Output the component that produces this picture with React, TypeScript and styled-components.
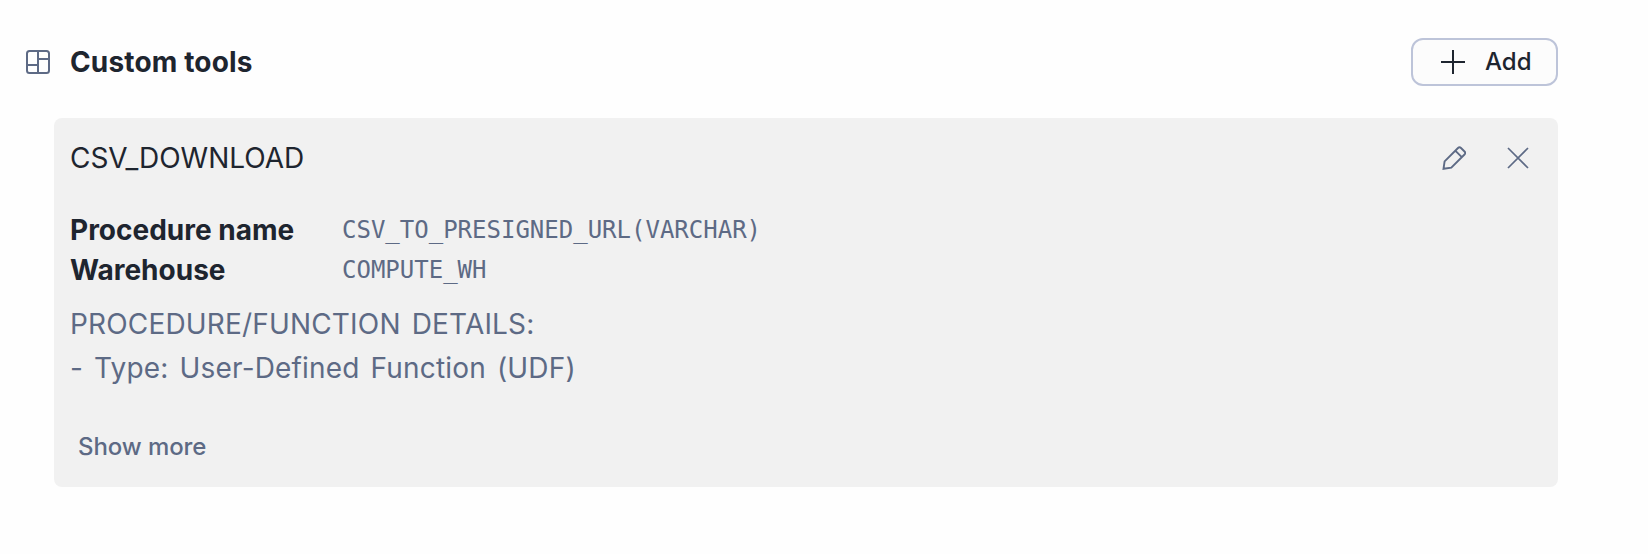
import React from "react";
import styled, { createGlobalStyle } from "styled-components";

const GlobalStyle = createGlobalStyle`
  *, *::before, *::after { box-sizing: border-box; }
  body {
    margin: 0;
    background: #fefefe;
    color: #1e252f;
    font-family: Inter, "Liberation Sans", sans-serif;
  }
`;

const Section = styled.section`
  width: 1558px;
  padding: 38px 0 0 26px;
`;

const Header = styled.header`
  display: flex;
  align-items: center;
  height: 48px;
`;

const Title = styled.h2`
  flex: 1;
  margin: 0 0 0 20px;
  font-size: 28px;
  line-height: 40px;
  font-weight: 700;
  letter-spacing: 0.15px;
`;

const AddButton = styled.button`
  display: flex;
  align-items: center;
  gap: 20px;
  width: 147px;
  height: 48px;
  padding: 0 0 0 28px;
  border: 2px solid #bdc4d9;
  border-radius: 12px;
  background: #fcfcfc;
  color: #1e252f;
  font: 500 24px/32px Inter, "Liberation Sans", sans-serif;
`;

const Card = styled.article`
  height: 369px;
  margin: 32px 0 0 28px;
  padding: 20px 16px 0;
  border-radius: 8px;
  background: #f1f1f1;
`;

const CardHeader = styled.div`
  display: flex;
  align-items: center;
  height: 40px;
  padding-right: 12px;
`;

const ToolName = styled.h3`
  flex: 1;
  margin: 0;
  font-size: 28px;
  line-height: 40px;
  font-weight: 400;
  letter-spacing: -0.04px;
`;

const Actions = styled.div`
  display: flex;
  gap: 40px;
`;

const IconButton = styled.button`
  display: flex;
  padding: 0;
  border: 0;
  background: none;
  color: #5d6a85;
`;

const Properties = styled.dl`
  display: grid;
  grid-template-columns: 272px 1fr;
  grid-auto-rows: 40px;
  margin: 32px 0 0;
`;

const Label = styled.dt`
  font-size: 28px;
  line-height: 40px;
  font-weight: 700;
`;

const Value = styled.dd`
  margin: 0;
  color: #5d6a85;
  font-family: "DejaVu Sans Mono", monospace;
  font-size: 24px;
  line-height: 40px;
`;

const Details = styled.p`
  margin: 12px 0 0;
  color: #5d6a85;
  font-size: 28px;
  line-height: 44px;
  white-space: pre-line;
  letter-spacing: 0.17px;
  word-spacing: 3px;
`;

const ShowMore = styled.button`
  display: block;
  margin: 41px 0 0;
  padding: 0 8px;
  border: 0;
  background: none;
  color: #5d6a85;
  font: 500 24px/32px Inter, "Liberation Sans", sans-serif;
  letter-spacing: -0.08px;
`;

const LayoutIcon = () => (
  <svg width="24" height="24" viewBox="0 0 24 24" fill="none" stroke="#5d6a85" strokeWidth="2">
    <rect x="1" y="1" width="22" height="22" rx="2.5" />
    <path d="M12 1V23M12 9H23M1 15H12" />
  </svg>
);

const PlusIcon = () => (
  <svg width="24" height="24" viewBox="0 0 24 24" fill="none" stroke="currentColor" strokeWidth="2">
    <path d="M12 0V24M0 12H24" />
  </svg>
);

const PencilIcon = () => (
  <svg width="24" height="24" viewBox="0 0 24 24" fill="none" stroke="currentColor" strokeWidth="1.9">
    <path d="M1.5 22.8L2.6 15.4L16 2Q17.5 0.5 19 2L22.5 5.5Q24 7 22.5 8.5L9.3 21.7L1.5 22.8ZM13.3 4.7L19.8 11.2" />
  </svg>
);

const CloseIcon = () => (
  <svg width="24" height="24" viewBox="0 0 24 24" fill="none" stroke="currentColor" strokeWidth="1.7">
    <path d="M2 2L22 22M22 2L2 22" />
  </svg>
);

const properties = [
  { label: "Procedure name", value: "CSV_TO_PRESIGNED_URL(VARCHAR)" },
  { label: "Warehouse", value: "COMPUTE_WH" },
];

export default function App() {
  return (
    <>
      <GlobalStyle />
      <Section>
        <Header>
          <LayoutIcon />
          <Title>Custom tools</Title>
          <AddButton>
            <PlusIcon />
            Add
          </AddButton>
        </Header>
        <Card>
          <CardHeader>
            <ToolName>CSV_DOWNLOAD</ToolName>
            <Actions>
              <IconButton aria-label="Edit"><PencilIcon /></IconButton>
              <IconButton aria-label="Remove"><CloseIcon /></IconButton>
            </Actions>
          </CardHeader>
          <Properties>
            {properties.map(({ label, value }) => (
              <React.Fragment key={label}>
                <Label>{label}</Label>
                <Value>{value}</Value>
              </React.Fragment>
            ))}
          </Properties>
          <Details>{"PROCEDURE/FUNCTION DETAILS:\n- Type: User-Defined Function (UDF)"}</Details>
          <ShowMore>Show more</ShowMore>
        </Card>
      </Section>
    </>
  );
}
